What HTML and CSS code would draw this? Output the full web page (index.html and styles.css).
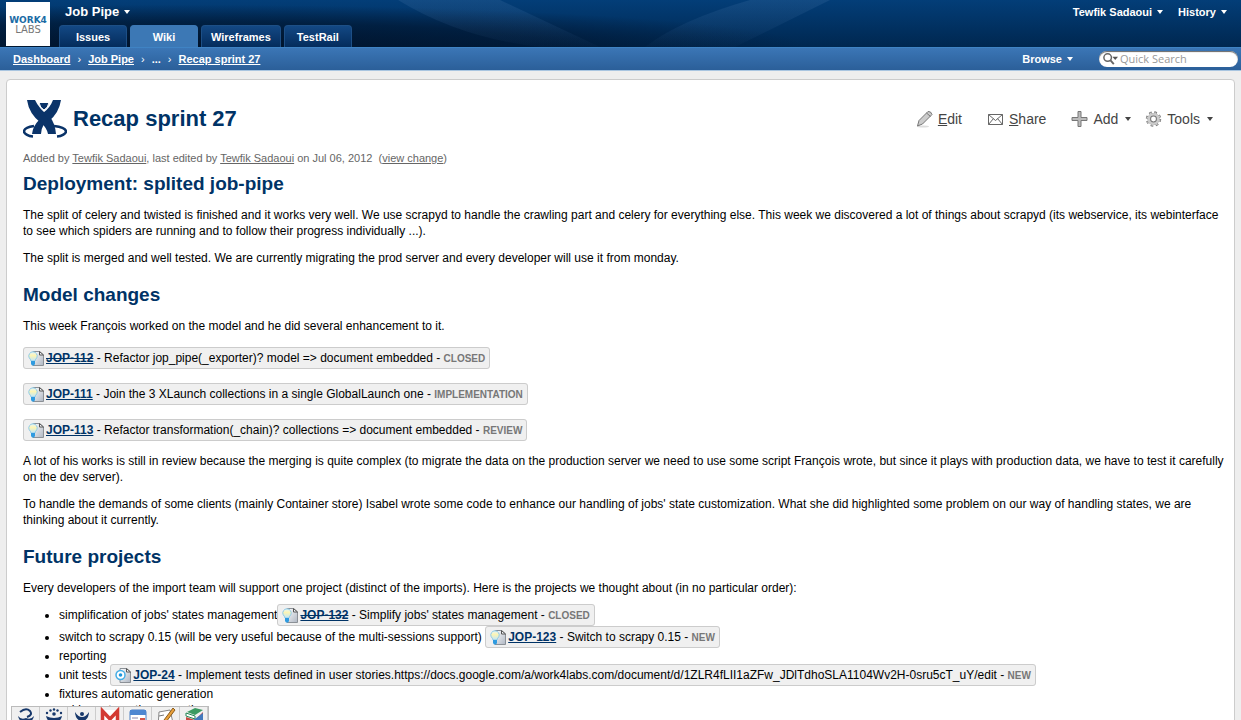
FILE: index.html
```html
<!DOCTYPE html>
<html lang="en">
<head>
<meta charset="utf-8">
<title>Recap sprint 27 - Job Pipe</title>
<link rel="stylesheet" href="styles.css">
</head>
<body>
<svg class="defs" aria-hidden="true">
  <defs>
    <linearGradient id="g-page" x1="0" y1="0" x2="1" y2="1"><stop offset="0" stop-color="#fff"/><stop offset="1" stop-color="#aeb6c2"/></linearGradient>
    <linearGradient id="g-bulb" x1="0" y1="0" x2="0" y2="1"><stop offset="0" stop-color="#e4f4fb"/><stop offset=".4" stop-color="#fdf5b4"/><stop offset="1" stop-color="#bfe6fa"/></linearGradient>
    <symbol id="i-doc" viewBox="0 0 16 16"><path d="M5 1.500h6.500L15.500 5v10.500H5z" fill="url(#g-page)" stroke="#8b9096"/><path d="M11.500 1.500V5h4z" fill="#f4f5f7" stroke="#555"/></symbol>
    <symbol id="i-idea" viewBox="0 0 16 16"><use href="#i-doc"/><path d="M5 1.800a4.200 4.200 0 0 0-3.800 6Q2.500 9 3 11h4q.5-2 1.800-3.200A4.200 4.200 0 0 0 5 1.800z" fill="url(#g-bulb)" stroke="#8ecbe8"/><path d="M3 11h4v3L6 15.500H4L3 14z" fill="#2f9be0"/></symbol>
    <symbol id="i-test" viewBox="0 0 16 16"><use href="#i-doc"/><circle cx="5.500" cy="8" r="4.500" fill="#fff" stroke="#45aee6" stroke-width="1.500"/><circle cx="5.500" cy="8" r="1.800" fill="#1d97dc"/></symbol>
  </defs>
</svg>
<header class="top">
  <svg class="rays" viewBox="0 0 1241 47" preserveAspectRatio="none" aria-hidden="true"><defs><linearGradient id="g-ray" x1="0" y1="0" x2="0" y2="1"><stop offset="0" stop-color="#4a78aa" stop-opacity=".22"/><stop offset="1" stop-color="#4a78aa" stop-opacity=".03"/></linearGradient></defs><path d="M398 0H500L600 47H540Q460 38 398 0z" fill="url(#g-ray)"/><path d="M750 0H830L735 47H645Q680 20 750 0z" fill="url(#g-ray)"/></svg>
  <a class="logo" href="#" aria-label="Work4 Labs"><b>WORK4</b><span>LABS</span></a>
  <div class="project">
    <button class="menu menu-lg">Job Pipe</button>
    <nav class="tabs"><a href="#">Issues</a><a href="#" class="on">Wiki</a><a href="#">Wireframes</a><a href="#">TestRail</a></nav>
  </div>
  <div class="account"><button class="menu">Tewfik Sadaoui</button><button class="menu">History</button></div>
</header>
<div class="bar">
  <nav class="crumbs"><a href="#">Dashboard</a><i>›</i><a href="#">Job Pipe</a><i>›</i><span>...</span><i>›</i><a href="#">Recap sprint 27</a></nav>
  <button class="menu">Browse</button>
  <label class="search"><svg viewBox="0 0 18 14" aria-hidden="true"><circle cx="6" cy="5.500" r="4" fill="none" stroke="#666" stroke-width="1.600"/><path d="M9 8.500l3.500 4" stroke="#666" stroke-width="2"/><path d="M11 4.500h6l-3 3.500z" fill="#555"/></svg><input type="text" placeholder="Quick Search" aria-label="Quick Search"></label>
</div>
<main class="page">
  <div class="head">
    <svg class="mark" viewBox="0 0 44 40" aria-hidden="true"><g fill="#0a3369"><path d="M4 1L12 1Q16 10 27 18Q32 24 33 35H25Q24 29 18 24Q6 15 4 1z"/><path d="M38 1H30Q27 9 20 14L26 22Q36 14 38 1z"/><path d="M16 21Q10 27 9 35H18Q18 30 21 25z"/></g><path d="M16 3.500h10q-1 5.500-5 7.500-4-2-5-7.500z" fill="#0a3369" stroke="#fff"/><path d="M11 27C4 28 1 30 1 32.500c0 2 4 4.500 9 5M31 27c8 1 12 3 12 5.500 0 2-4 4.500-9 5" fill="none" stroke="#0a3369" stroke-width="2.600"/></svg>
    <h1>Recap sprint 27</h1>
    <div class="tools">
      <button><svg viewBox="0 0 17 18" aria-hidden="true"><ellipse cx="7" cy="16.500" rx="6" ry="1" fill="#ddd"/><path d="M1.500 16l1.500-5.500L12 1.500q3-.5 4 3L6.500 14z" fill="#ccc" stroke="#777"/><path d="M10.500 3l4 3.500" fill="none" stroke="#777"/></svg><span><u>E</u>dit</span></button>
      <button><svg viewBox="0 0 17 18" aria-hidden="true"><path d="M1.500 4.500h14v10h-14zl7 6 7-6M1.500 14.500l5-6M15.500 14.500l-5-6" fill="none" stroke="#666"/></svg><span><u>S</u>hare</span></button>
      <button class="drop"><svg viewBox="0 0 17 18" aria-hidden="true"><path d="M7 1.500h3V7.500h6v3h-6v6H7v-6H1v-3h6z" fill="#bbb" stroke="#777"/></svg><span>Add</span></button>
      <button class="drop"><svg viewBox="0 0 17 18" aria-hidden="true"><circle cx="8.500" cy="9" r="6.200" fill="none" stroke="#777" stroke-width="3" stroke-dasharray="2.435 2.435"/><circle cx="8.500" cy="9" r="4.200" fill="none" stroke="#777" stroke-width="3.500"/><circle cx="8.500" cy="9" r="4.700" fill="none" stroke="#ccc" stroke-width="2.500"/><circle cx="8.500" cy="9" r="6" fill="none" stroke="#ccc" stroke-width="2" stroke-dasharray="1.300 3.412" stroke-dashoffset="-.5"/></svg><span>Tools</span></button>
    </div>
  </div>
  <p class="meta">Added by <a href="#">Tewfik Sadaoui</a>, last edited by <a href="#">Tewfik Sadaoui</a> on Jul 06, 2012 &nbsp;(<a href="#">view change</a>)</p>
  <article>
    <h2>Deployment: splited job-pipe</h2>
    <p>The split of celery and twisted is finished and it works very well. We use scrapyd to handle the crawling part and celery for everything else. This week we discovered a lot of things about scrapyd (its webservice, its webinterface to see which spiders are running and to follow their progress individually ...).</p>
    <p>The split is merged and well tested. We are currently migrating the prod server and every developer will use it from monday.</p>
    <h2>Model changes</h2>
    <p>This week François worked on the model and he did several enhancement to it.</p>
    <p class="row"><span class="issue"><svg aria-hidden="true"><use href="#i-idea"/></svg><a href="#" class="done">JOP-112</a> - Refactor jop_pipe(_exporter)? model =&gt; document embedded - <b>CLOSED</b></span></p>
    <p class="row"><span class="issue"><svg aria-hidden="true"><use href="#i-idea"/></svg><a href="#">JOP-111</a> - Join the 3 XLaunch collections in a single GlobalLaunch one - <b>IMPLEMENTATION</b></span></p>
    <p class="row"><span class="issue"><svg aria-hidden="true"><use href="#i-idea"/></svg><a href="#">JOP-113</a> - Refactor transformation(_chain)? collections =&gt; document embedded - <b>REVIEW</b></span></p>
    <p>A lot of his works is still in review because the merging is quite complex (to migrate the data on the production server we need to use some script François wrote, but since it plays with production data, we have to test it carefully on the dev server).</p>
    <p>To handle the demands of some clients (mainly Container store) Isabel wrote some code to enhance our handling of jobs' state customization. What she did highlighted some problem on our way of handling states, we are <br>thinking about it currently.</p>
    <h2>Future projects</h2>
    <p>Every developers of the import team will support one project (distinct of the imports). Here is the projects we thought about (in no particular order):</p>
    <ul>
      <li class="tall">simplification of jobs' states management<span class="issue"><svg aria-hidden="true"><use href="#i-idea"/></svg><a href="#" class="done">JOP-132</a> - Simplify jobs' states management - <b>CLOSED</b></span></li>
      <li class="tall">switch to scrapy 0.15 (will be very useful because of the multi-sessions support) <span class="issue"><svg aria-hidden="true"><use href="#i-idea"/></svg><a href="#">JOP-123</a> - Switch to scrapy 0.15 - <b>NEW</b></span></li>
      <li>reporting</li>
      <li class="tall">unit tests <span class="issue"><svg aria-hidden="true"><use href="#i-test"/></svg><a href="#">JOP-24</a> - Implement tests defined in user stories.https://docs.google.com/a/work4labs.com/document/d/1ZLR4fLII1aZFw_JDlTdhoSLA1104Wv2H-0sru5cT_uY/edit - <b>NEW</b></span></li>
      <li>fixtures automatic generation</li>
      <li>spider automatic generation</li>
      <li>documentation (the pages in the wiki which detail the import architecture need to be updated)</li>
    </ul>
  </article>
</main>
<nav class="dock" aria-label="Shortcuts">
  <a href="#" aria-label="JIRA"><svg viewBox="0 0 20 20"><path d="M4 5q6-5 10-1 3 4-3 6" fill="none" stroke="#17386b" stroke-width="2"/><path d="M2 9q3 4 8 2 5 2 8-2-1 5-5 6l2 5H5l2-5Q3 14 2 9z" fill="#17386b"/></svg></a>
  <a href="#" aria-label="Crowd"><svg viewBox="0 0 20 20"><g fill="#17386b"><circle cx="3" cy="6" r="1.200"/><circle cx="6.500" cy="3.500" r="1.200"/><circle cx="10" cy="2.500" r="1.200"/><circle cx="13.500" cy="3.500" r="1.200"/><circle cx="17" cy="6" r="1.200"/><circle cx="10" cy="7" r="1.800"/><path d="M2 9q4 2 8 2t8-2q-1 5-5 6l2 5H5l2-5Q3 14 2 9z"/></g></svg></a>
  <a href="#" aria-label="Confluence"><svg viewBox="0 0 20 20"><g fill="#17386b"><circle cx="10" cy="7" r="2"/><path d="M3 5q3 5 7 5t7-5q0 6-5 9l3 6H5l3-6Q3 11 3 5z"/></g></svg></a>
  <a href="#" aria-label="Mail"><svg viewBox="0 0 20 20"><path d="M1 3h18v17H1z" fill="#fff"/><path d="M2.500 20V4L10 12l7.500-8v16" fill="none" stroke="#d33a32" stroke-width="3.500"/></svg></a>
  <a href="#" aria-label="Calendar"><svg viewBox="0 0 20 20"><rect x="2" y="3" width="16" height="17" rx="2" fill="#fff" stroke="#4a7fc4"/><path d="M2 3h16v5H2z" fill="#4d87d1"/><path d="M12 11h5v7h-5z" fill="#d5564a"/><path d="M4 11h6M4 14h6" stroke="#88a"/></svg></a>
  <a href="#" aria-label="Documents"><svg viewBox="0 0 20 20"><path d="M3 5l11-2 4 17H2z" fill="#fff" stroke="#888"/><path d="M17 1L8 13l-2 4 4-2 9-12z" fill="#e9a13b" stroke="#8a5a1c"/><path d="M3 9l5-1" stroke="#777"/></svg></a>
  <a href="#" aria-label="Library"><svg viewBox="0 0 20 20"><path d="M3 5l8-4 8 2-8 5z" fill="#3b9a62"/><path d="M2 6l9 3v3L2 9z" fill="#fff" stroke="#285"/><path d="M2 10l9 3 8-8v3l-8 9-9-3z" fill="#c84b42"/><path d="M8 14l11-8v8l-8 6H8z" fill="#4479bd"/></svg></a>
</nav>
</body>
</html>
```
FILE: styles.css
```css
* { box-sizing: border-box; }
html { height: 100%; overflow: hidden; }
body { margin: 0; height: 100%; overflow: hidden; background: #eee; color: #000; font: 12px/16px "Liberation Sans", Arial, sans-serif; }
button { margin: 0; padding: 0; border: 0; background: none; font: inherit; color: inherit; cursor: pointer; }
.defs { position: absolute; width: 0; height: 0; }

.top { position: relative; display: flex; height: 47px; padding: 0 14px 0 6px; color: #fff; background: radial-gradient(ellipse 50% 90% at 15% 100%, rgba(0, 14, 34, .8), rgba(0, 14, 34, .5) 60%, transparent), linear-gradient(#033e78, #002750); font-size: 11px; }
.rays { position: absolute; left: 0; top: 0; width: 100%; height: 100%; }
.logo { position: relative; display: flex; flex-direction: column; align-items: center; justify-content: center; width: 44px; height: 44px; margin: 2px 9px 0 0; padding-top: 2px; background: #fff; font: bold 10px/10px "DejaVu Sans", sans-serif; color: #1b6ba5; text-decoration: none; }
.logo b { font-size: 9px; }
.logo span { font-weight: normal; color: #777; }
.project { position: relative; flex: 1; }
.menu { display: flex; align-items: center; gap: 5px; font-weight: bold; color: #fff; }
.menu::after, .drop::after { content: ""; border: 3px solid transparent; border-top: 4px solid currentColor; border-bottom: 0; }
.menu-lg { height: 24px; margin-bottom: 1px; padding-left: 6px; font-size: 13px; }
.tabs { display: flex; gap: 3px; }
.tabs a { min-width: 68px; height: 22px; padding: 0 9px; border: 1px solid #1d4f86; border-bottom: 0; border-radius: 4px 4px 0 0; background: linear-gradient(#134884, #042c5c); color: #fff; font-weight: bold; line-height: 22px; text-align: center; text-decoration: none; }
.tabs .on { border-color: #3c78b5; background: #3c78b5; }
.account { position: relative; display: flex; gap: 15px; height: 23px; }

.bar { display: flex; align-items: center; height: 24px; padding: 0 3px 0 13px; border-top: 1px solid #3f83c4; border-bottom: 1px solid #a9c5e0; background: linear-gradient(#3b76b6, #2b5f99); color: #fff; font-size: 11px; }
.crumbs { flex: 1; display: flex; gap: 7px; font-weight: bold; }
.crumbs a { color: #fff; }
.crumbs i { font-style: normal; font-weight: normal; }
.search { display: flex; align-items: center; width: 139px; height: 16px; margin-left: 26px; padding-left: 3px; border-radius: 8px; background: #fff; box-shadow: inset 0 1px 1px #666; }
.search svg { width: 17px; height: 14px; flex: none; }
.search input { flex: 1; min-width: 0; padding: 0 0 0 1px; border: 0; background: none; font: 11px/14px "Open Sans", sans-serif; outline: 0; }
.search input::placeholder { color: #999; }

.page { margin: 8px 6px 0; padding: 17px 8px 17px 16px; border: 1px solid #ccc; border-radius: 4px; background: #fff; }
.head { display: flex; align-items: center; height: 44px; }
.mark { width: 44px; height: 40px; margin-right: 6px; }
h1 { flex: 1; margin: 0; color: #036; font-size: 22px; line-height: 28px; }
.tools { display: flex; margin-right: 13px; color: #444; font-size: 14px; line-height: 18px; }
.tools button { display: flex; align-items: center; gap: 5px; margin-left: 25px; }
.tools svg { width: 17px; height: 18px; }
.tools .drop + .drop { margin-left: 14px; }
.drop::after { margin-left: 2px; }
.meta { margin: 9px 0 0; color: #666; font-size: 11px; }
.meta a { color: #666; }
h2 { margin: 17px 0 0; color: #036; font-size: 19px; line-height: 24px; }
.meta + article h2:first-child { margin-top: 6px; }
article p { margin: 11px 0 0; line-height: 16px; }
article .row { margin: 12px 0 0; line-height: 24px; }
.issue { padding: 3px 4px; border: 1px solid #ccc; border-radius: 3px; background: #f0f0f0; white-space: nowrap; }
.issue svg { width: 16px; height: 16px; margin: -4px 2px -3px 0; vertical-align: -1px; }
.issue a { color: #036; font-weight: bold; }
.issue .done { text-decoration: line-through underline; }
.issue b { color: #777; font-size: 10px; line-height: 16px; }
ul { margin: 8px 0 0; padding-left: 36px; }
li { line-height: 16px; }
.tall { line-height: 22px; }

.dock { position: fixed; left: 11px; bottom: 0; display: flex; height: 14px; overflow: hidden; border: 1px solid #bbb; border-bottom: 0; background: #f0f0f0; }
.dock a { width: 28px; height: 28px; padding: 0 4px; border-right: 1px solid #ccc; }
.dock svg { display: block; width: 20px; height: 20px; }
```
